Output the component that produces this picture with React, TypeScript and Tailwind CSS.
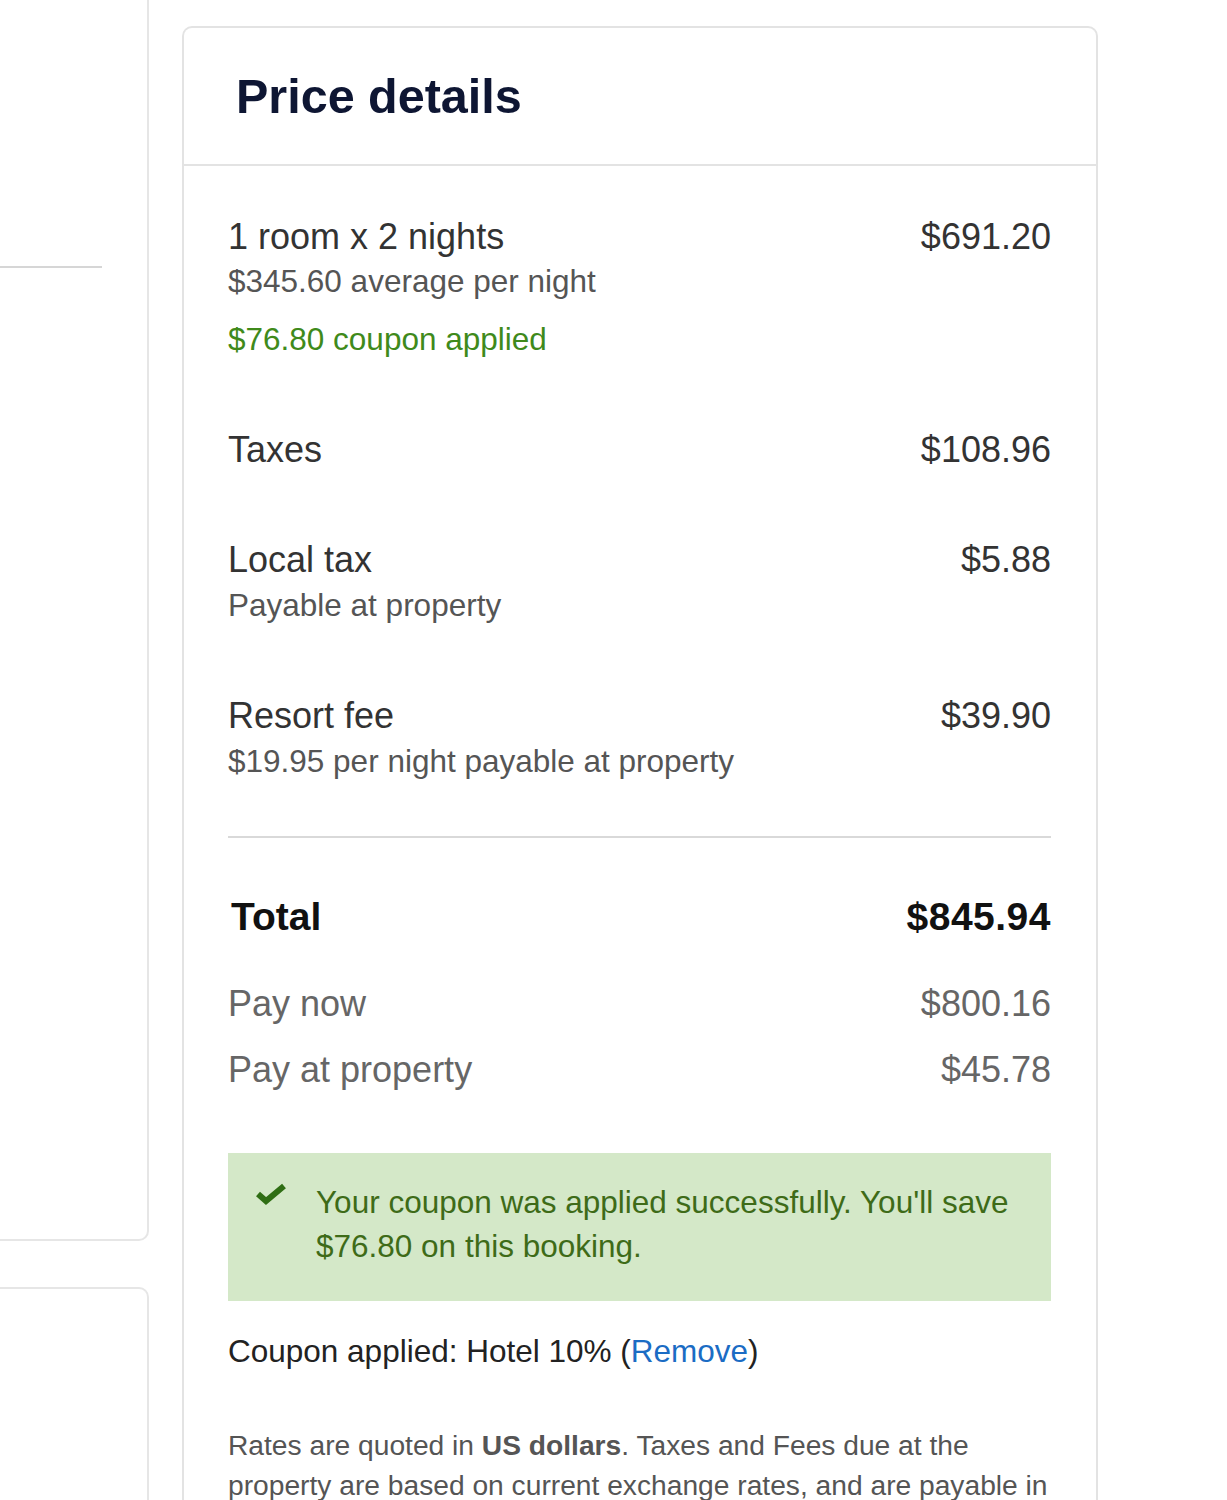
const rows = [
  { label: "Taxes", value: "$108.96" },
  { label: "Local tax", value: "$5.88", sub: "Payable at property" },
  { label: "Resort fee", value: "$39.90", sub: "$19.95 per night payable at property" },
];

const CheckMark = () => (
  <svg width="32" height="22" viewBox="0 0 32 22" className="shrink-0 mt-[3px]">
    <path d="M3 11 L11 18 L29 3" fill="none" stroke="#2f6e14" strokeWidth="6" strokeLinejoin="miter" />
  </svg>
);

const LineItem = ({ label, value, sub }: { label: string; value: string; sub?: string }) => (
  <div className="mt-[65px]">
    <div className="flex justify-between text-[36px] leading-[45px] text-[#333]">
      <span>{label}</span>
      <span>{value}</span>
    </div>
    {sub && <div className="text-[31.5px] leading-[45px] text-[#555] mt-px">{sub}</div>}
  </div>
);

export default function App() {
  return (
    <div className="flex bg-white min-h-[1500px] overflow-hidden" style={{ fontFamily: '"Liberation Sans", Arial, sans-serif' }}>
      {/* left column, mostly cut off */}
      <div className="w-[149px] shrink-0 flex flex-col">
        <div className="h-[1241px] border-r-2 border-b-2 border-[#e6e6e6] rounded-br-[10px] pr-[45px]">
          <div className="h-[266px]"></div>
          <div className="border-t-2 border-[#d6d6d6]"></div>
        </div>
        <div className="mt-[46px] flex-1 border-r-2 border-t-2 border-[#e6e6e6] rounded-tr-[10px]"></div>
      </div>

      {/* price details card */}
      <div className="ml-[33px] mt-[26px] w-[916px] shrink-0 border-2 border-[#e3e3e3] rounded-t-[10px] border-b-0 self-start">
        <div className="h-[138px] border-b-2 border-[#e3e3e3] flex items-center pl-[52px]">
          <h2 className="text-[48.5px] font-bold text-[#0e1633] leading-none">Price details</h2>
        </div>

        <div className="pl-[44px] pr-[45px] pt-[48px] pb-10">
          <div>
            <div className="flex justify-between text-[36px] leading-[45px] text-[#333]">
              <span>1 room x 2 nights</span>
              <span>$691.20</span>
            </div>
            <div className="text-[31.5px] leading-[45px] text-[#555]">$345.60 average per night</div>
            <div className="text-[31.5px] leading-[45px] text-[#3f8a1b] mt-[13px]">$76.80 coupon applied</div>
          </div>

          {rows.map((r) => (
            <LineItem key={r.label} label={r.label} value={r.value} sub={r.sub} />
          ))}

          <div className="border-t-2 border-[#d9d9d9] mt-[52px]"></div>

          <div className="flex justify-between text-[39px] leading-[45px] font-bold text-[#111] mt-[56px] pl-[3px]">
            <span>Total</span>
            <span className="tracking-[0.5px]">$845.94</span>
          </div>
          <div className="flex justify-between text-[36px] leading-[45px] text-[#666] mt-[42px]">
            <span>Pay now</span>
            <span>$800.16</span>
          </div>
          <div className="flex justify-between text-[36px] leading-[45px] text-[#666] mt-[21px]">
            <span>Pay at property</span>
            <span>$45.78</span>
          </div>

          <div className="mt-[61px] bg-[#d4e8c8] h-[148px] pl-[27px] pr-6 pt-[27px] flex gap-[29px]">
            <CheckMark />
            <p className="text-[31.5px] leading-[44px] text-[#3e6b18]">
              Your coupon was applied successfully. You'll save $76.80 on this booking.
            </p>
          </div>

          <p className="mt-[28px] text-[31.5px] leading-[44px] text-[#222]">
            Coupon applied: Hotel 10% (<a className="text-[#1b6cc4] cursor-pointer">Remove</a>)
          </p>

          <p className="mt-[52px] text-[28.2px] leading-[40px] text-[#555]">
            Rates are quoted in <span className="font-bold">US dollars</span>. Taxes and Fees due at the property are
            based on current exchange rates, and are payable in local currency.
          </p>
        </div>
      </div>
    </div>
  );
}
